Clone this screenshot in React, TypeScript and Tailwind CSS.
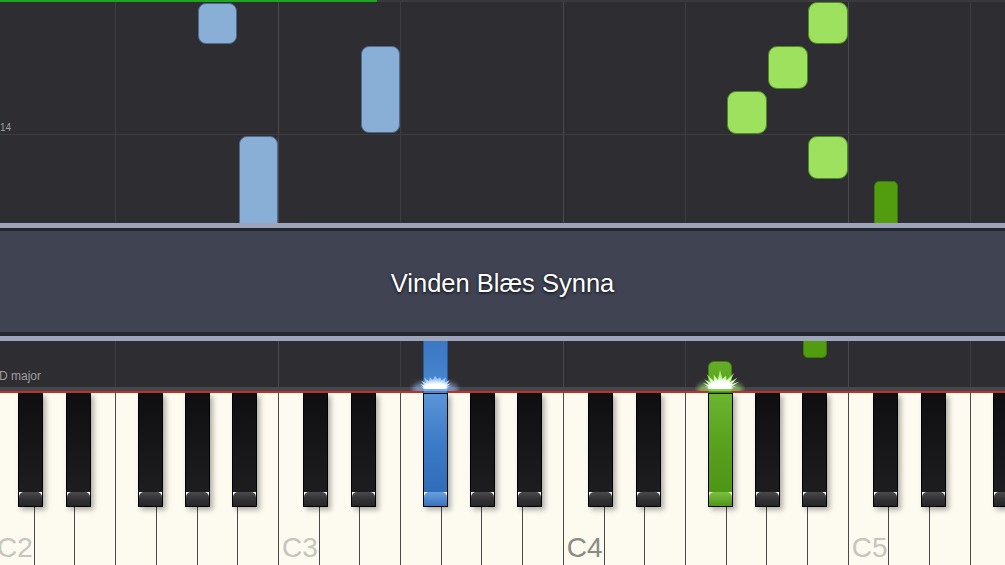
import React from "react";

const OCT = [-7, 278, 563, 848];
const BOFF = [25, 73, 145, 192, 239];
const GRID = [
  { x: 115, c: false },
  { x: 278, c: true },
  { x: 400, c: false },
  { x: 563, c: true },
  { x: 685, c: false },
  { x: 848, c: true },
  { x: 970, c: false },
];

function Glow({ id, className, edge, spikes }: { id: string; className: string; edge: string; spikes: number[] }) {
  const n = spikes.length - 1;
  const pts: string[] = [];
  for (let i = 0; i <= n; i++) {
    const a = Math.PI * (i / n);
    const r = spikes[i];
    pts.push(`${(25 + Math.cos(a) * (r * 1.35 + 6)).toFixed(1)},${(24 - Math.sin(a) * r).toFixed(1)}`);
  }
  return (
    <svg className={className} width="50" height="26" viewBox="0 0 50 26">
      <defs>
        <filter id={`b1${id}`} x="-50%" y="-50%" width="200%" height="200%">
          <feGaussianBlur stdDeviation="0.6" />
        </filter>
        <filter id={`b2${id}`} x="-50%" y="-50%" width="200%" height="200%">
          <feGaussianBlur stdDeviation="2.5" />
        </filter>
        <radialGradient id={`g${id}`} cx="50%" cy="100%" r="75%">
          <stop offset="0%" stopColor="#ffffff" />
          <stop offset="50%" stopColor="#ffffff" />
          <stop offset="100%" stopColor={edge} />
        </radialGradient>
      </defs>
      <ellipse cx="25" cy="24" rx="23" ry="8" fill={edge} opacity="0.6" filter={`url(#b2${id})`} />
      <polygon points={pts.join(" ")} fill={`url(#g${id})`} filter={`url(#b1${id})`} />
    </svg>
  );
}

function GridLines() {
  return (
    <>
      {GRID.map((g) => (
        <div
          key={g.x}
          className={`absolute top-0 bottom-0 w-px ${g.c ? "bg-[#4a494e]" : "bg-[#3d3c41]"}`}
          style={{ left: g.x }}
        />
      ))}
    </>
  );
}

function BlackKey({ left, kind }: { left: number; kind: "n" | "b" | "g" }) {
  const body =
    kind === "b"
      ? "bg-linear-to-b from-[#5b95d8] via-[#3c7bc6] to-[#2f6db8]"
      : kind === "g"
      ? "bg-linear-to-b from-[#6cb52e] via-[#58a21e] to-[#4e9616]"
      : "bg-linear-to-b from-[#0f0f11] via-[#161618] to-[#1d1d1f]";
  const bevel =
    kind === "b"
      ? "bg-linear-to-b from-[#6aa0e0] to-[#3572bd]"
      : kind === "g"
      ? "bg-linear-to-b from-[#7cc040] to-[#4e9616]"
      : "bg-linear-to-b from-[#4a4a4c] via-[#333335] to-[#262628]";
  return (
    <div
      className="absolute top-0 h-[114px] w-[25px] border border-black flex flex-col shadow-[3px_3px_5px_rgba(0,0,0,0.3)]"
      style={{ left }}
    >
      <div className={`flex-1 ${body}`} />
      <div className={`h-[14px] rounded-t-[5px] ${bevel}`} />
    </div>
  );
}

export default function App() {
  const blacks: { left: number; kind: "n" | "b" | "g" }[] = [];
  OCT.forEach((o) =>
    BOFF.forEach((b) => {
      const l = o + b;
      if (l < 1005) blacks.push({ left: l, kind: l === 423 ? "b" : l === 708 ? "g" : "n" });
    })
  );
  const labels: Record<number, { t: string; c: string }> = {
    0: { t: "C2", c: "text-[#c6c5be]" },
    7: { t: "C3", c: "text-[#c6c5be]" },
    14: { t: "C4", c: "text-[#8b8a85]" },
    21: { t: "C5", c: "text-[#c6c5be]" },
  };

  return (
    <div className="w-[1005px] h-[565px] overflow-hidden flex flex-col bg-[#2e2d31] font-['Liberation_Sans',Arial,sans-serif]">
      {/* progress strip */}
      <div className="h-[2px] flex bg-[#3a3a3e]">
        <div className="w-[377px] bg-[#1ea51e]" />
      </div>

      {/* falling notes area */}
      <div className="relative h-[221px] overflow-hidden bg-[#2e2d31]">
        <GridLines />
        <div className="absolute left-0 right-0 top-[132px] h-px bg-[#3d3c41]" />
        <div className="absolute left-0 top-[121px] text-[10px] leading-none text-[#a09fa4]">14</div>

        <div className="absolute left-[198px] top-[1px] w-[39px] h-[41px] rounded-[8px] bg-[#8aafd7] border border-[#4d6a8e]" />
        <div className="absolute left-[361px] top-[44px] w-[39px] h-[87px] rounded-[8px] bg-[#8aafd7] border border-[#4d6a8e]" />
        <div className="absolute left-[239px] top-[134px] w-[39px] h-[100px] rounded-[8px] bg-[#8aafd7] border border-[#4d6a8e]" />

        <div className="absolute left-[808px] top-[0px] w-[40px] h-[42px] rounded-[9px] bg-[#9de15f] border border-[#4a8a24]" />
        <div className="absolute left-[768px] top-[44px] w-[40px] h-[43px] rounded-[9px] bg-[#9de15f] border border-[#4a8a24]" />
        <div className="absolute left-[727px] top-[89px] w-[40px] h-[43px] rounded-[9px] bg-[#9de15f] border border-[#4a8a24]" />
        <div className="absolute left-[808px] top-[134px] w-[40px] h-[43px] rounded-[9px] bg-[#9de15f] border border-[#4a8a24]" />
        <div className="absolute left-[874px] top-[179px] w-[24px] h-[60px] rounded-[5px] bg-[#529d0f] border border-[#3b7a08]" />
      </div>

      {/* banner */}
      <div className="h-[5px] bg-[#9ea4ba]" />
      <div className="h-[3px] bg-[#25272f]" />
      <div className="h-[101px] bg-[#3f4352] flex items-center justify-center pt-[4px]">
        <span className="text-white text-[25.5px] leading-none [text-shadow:0_1px_3px_rgba(0,0,0,0.9)]">
          Vinden Blæs Synna
        </span>
      </div>
      <div className="h-[4px] bg-[#25272f]" />
      <div className="h-[5px] bg-[#9ea4ba]" />

      {/* lower strip */}
      <div className="relative h-[46px] bg-[#2e2d31]">
        <GridLines />
        <div className="absolute left-[-1px] bottom-[5px] text-[12px] leading-none text-[#a09fa4]">D major</div>
        <div className="absolute left-[423px] top-0 w-[25px] h-[52px] bg-linear-to-b from-[#3a78c4] to-[#4a88d0] border-x border-[#2a5a96]" />
        <div className="absolute left-[803px] top-0 w-[24px] h-[17px] rounded-b-[5px] bg-[#529d0f] border border-[#3b7a08] border-t-0" />
        <div className="absolute left-[708px] top-[20px] w-[24px] h-[32px] rounded-t-[6px] bg-linear-to-b from-[#64ad26] to-[#58a31d] border border-[#3f7e10]" />
        <Glow
          id="b"
          className="absolute left-[410px] bottom-[-4px] z-10"
          edge="#9cc6ff"
          spikes={[3, 5, 4, 8, 5, 10, 7, 12, 8, 13, 9, 12, 10, 13, 9, 12, 8, 13, 7, 11, 6, 9, 5, 7, 4, 5, 2]}
        />
        <Glow
          id="g"
          className="absolute left-[695px] bottom-[-4px] z-10"
          edge="#a6f070"
          spikes={[3, 6, 4, 9, 5, 13, 7, 15, 8, 18, 9, 14, 10, 19, 9, 15, 8, 17, 7, 13, 6, 11, 5, 8, 4, 6, 2]}
        />
      </div>

      {/* separator lines */}
      <div className="h-[4px] bg-[#47464b]" />
      <div className="h-[2px] bg-[#c0302a]" />

      {/* keyboard */}
      <div className="relative h-[172px] bg-[#fdfbf0] overflow-hidden">
        <div className="flex h-full ml-[-7px]">
          {Array.from({ length: 25 }, (_, i) => (
            <div
              key={i}
              className="relative h-full w-[40.714px] shrink-0 border-l-[1.5px] border-[#4a4a4a] bg-[#fdfbf0] flex flex-col justify-end pb-[3px] pl-[3px]"
            >
              {labels[i] && (
                <span className={`text-[28px] leading-[28px] ${labels[i].c}`}>{labels[i].t}</span>
              )}
            </div>
          ))}
        </div>
        {blacks.map((b) => (
          <BlackKey key={b.left} left={b.left} kind={b.kind} />
        ))}
      </div>
    </div>
  );
}
